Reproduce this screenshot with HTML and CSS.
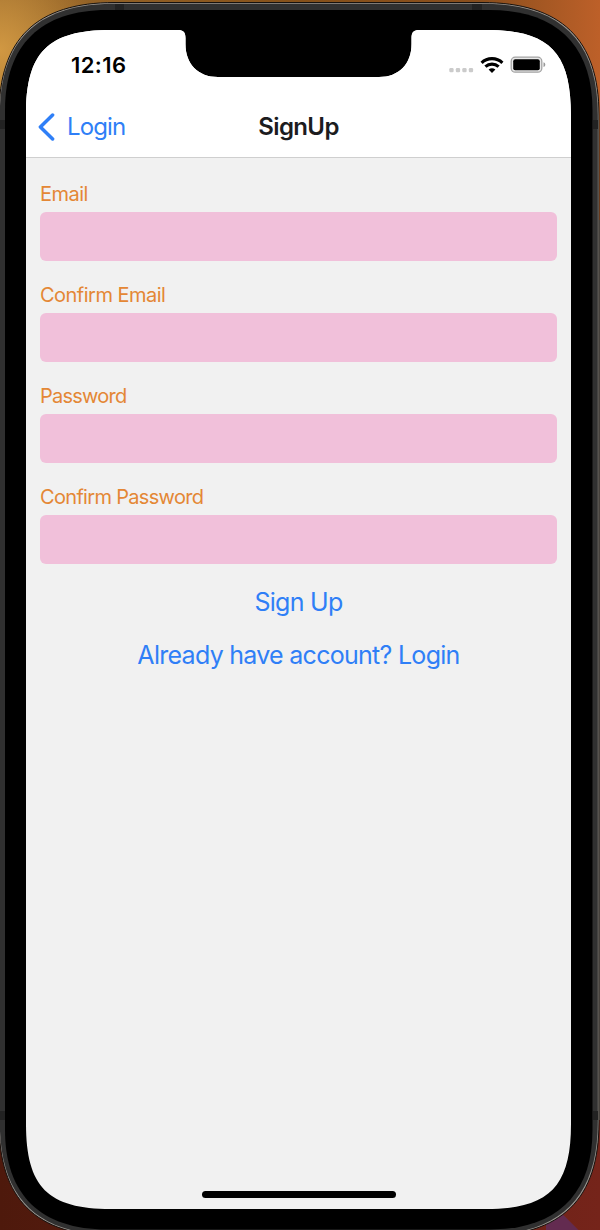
FILE: index.html
```
<!DOCTYPE html>
<html lang="en">
<head>
<meta charset="utf-8">
<title>SignUp</title>
<link rel="stylesheet" href="styles.css">
</head>
<body>
<div class="desktop">
  <svg class="shell" width="600" height="1230" viewBox="0 0 600 1230" aria-hidden="true">
    <path class="shell-rim" d="M-1 115C-1 39 36 2.500 115 2.500H482C561 2.500 599 39 599 115V1122C599 1199 562 1236 482 1236H115C35 1236 -1 1199 -1 1122Z"/>
    <path class="shell-edge" d="M-.2 115C-.2 40 37 3.700 115 3.700H482C560 3.700 597.800 40 597.800 115V1122C597.800 1198 560 1235 482 1235H115C37 1235 -.2 1198 -.2 1122Z"/>
    <path class="shell-seam" d="M115 4h9v6h-9zM472 4h10v6h-10zM0 120h5v9H0zM593 120h5v9h-5zM0 1111h5v9H0zM593 1111h5v9h-5z"/>
    <path class="shell-bezel" d="M5 110C5 45 41 10 107 10H490C556 10 592.500 45 592.500 110V1130C592.500 1195 556 1229.500 490 1229.500H107C41 1229.500 5 1195 5 1130Z"/>
  </svg>
  <main class="screen">
    <div class="status">
      <time class="clock">12:16</time>
      <div class="signals">
        <svg class="dots" width="25" height="6" viewBox="0 0 25 6" fill="#cbcbcb"><rect x=".3" y="1" width="4.300" height="4.300" rx="1.200"/><rect x="6.800" y="1" width="4.300" height="4.300" rx="1.200"/><rect x="13.300" y="1" width="4.300" height="4.300" rx="1.200"/><rect x="19.800" y="1" width="4.300" height="4.300" rx="1.200"/></svg>
        <svg width="24" height="18" viewBox="0 0 24 18" fill="none" stroke="#000" stroke-width="3.100"><path d="M1.600 6.800C7.300 1.200 16.700 1.200 22.400 6.800"/><path d="M5.400 10.700C9.200 7.200 14.800 7.200 18.600 10.700"/><path d="M8.600 13.600Q12 10.700 15.400 13.600L12 17Z" fill="#000" stroke="none"/></svg>
        <svg width="36" height="18" viewBox="0 0 36 18"><rect x="1.200" y="1.200" width="30.600" height="15" rx="4" fill="#e9e9e9" stroke="#a3a3a3" stroke-width="1.300"/><rect x="3.200" y="3.200" width="26.600" height="11" rx="2" fill="#000"/><path d="M33.500 6.300q1.800.5 1.800 2.400t-1.800 2.400z" fill="#999"/></svg>
      </div>
    </div>
    <header class="nav">
      <a class="back"><svg width="17" height="28" viewBox="0 0 17 28" fill="none" stroke="#2f7ff7" stroke-width="3.500" stroke-linecap="round" stroke-linejoin="round"><path d="M14.600 2L2.400 14L14.600 26"/></svg><span>Login</span></a>
      <h1 class="title">SignUp</h1>
    </header>
    <form class="form">
      <label class="field"><span class="label l-email">Email</span><input class="input" type="text"></label>
      <label class="field"><span class="label l-cemail">Confirm Email</span><input class="input" type="text"></label>
      <label class="field"><span class="label l-pass">Password</span><input class="input" type="password"></label>
      <label class="field"><span class="label l-cpass">Confirm Password</span><input class="input" type="password"></label>
      <button class="action signup" type="button">Sign Up</button>
      <button class="action login" type="button">Already have account? Login</button>
    </form>
    <div class="home"></div>
  </main>
</div>
</body>
</html>
```
FILE: styles.css
```
* { box-sizing: border-box; }
body { margin: 0; font-family: Inter, "Liberation Sans", sans-serif; }
.desktop {
  position: relative; width: 600px; height: 1230px; overflow: hidden; padding: 30px 29px 21px 26px;
  background:
    linear-gradient(225deg, transparent 19px, #632b50 20px) 546px 1210px / 40px 40px no-repeat,
    radial-gradient(circle at 0 50px, #d19842, transparent 100px),
    linear-gradient(90deg, #9a6a2c, #855019 50%, #8a4e1c 80%, #bd6029) 0 0 / 100% 220px no-repeat,
    linear-gradient(#77706a, #77706a) 100% 220px / 10px 900px no-repeat,
    linear-gradient(90deg, #4e190c, #75241a);
}
.shell { position: absolute; inset: 0; }
.shell-rim { fill: #98938e; stroke: #17120e; stroke-width: 1; }
.shell-edge { fill: #303030; }
.shell-seam { fill: #222; }
.shell-bezel { fill: #000; }
.screen {
  position: relative; width: 545px; height: 1179px; background: #f1f1f1;
  display: flex; flex-direction: column;
  clip-path: path("M0 85C0 22 22 0 85 0H152C157 0 159.500 2 159.500 8V14C159.500 34 172 47 192 47H353C373 47 385.500 34 385.500 14V8C385.500 2 388 0 393 0H460C523 0 545 22 545 85V1094C545 1157 523 1179 460 1179H85C22 1179 0 1157 0 1094Z");
}
.status { display: flex; justify-content: space-between; height: 66px; background: #fff; padding: 22px 25px 0 45px; }
.clock { font-size: 22px; line-height: 26px; font-weight: 600; letter-spacing: .4px; color: #000; }
.signals { display: flex; height: 25px; align-items: center; gap: 6px; }
.signals svg { flex: none; }
.signals .dots { margin-top: 11px; }
.nav {
  display: grid; grid-template-columns: 1fr auto 1fr; align-items: center; height: 62px; flex: none;
  background: #fff; border-bottom: 1px solid #cfcfcf; padding: 0 12px;
}
.back { display: flex; align-items: center; gap: 12px; color: #2f7ff7; font-size: 24px; letter-spacing: -.9px; }
.title { margin: 0; color: #1c1c1e; font-size: 24px; font-weight: 600; letter-spacing: -.6px; }
.form { display: flex; flex-direction: column; padding: 24px 14px 0; }
.field { display: flex; flex-direction: column; height: 101px; gap: 4.5px; }
.label { color: #e48735; font-size: 20px; line-height: 25px; }
.l-email { letter-spacing: -.5px; }
.l-cemail { letter-spacing: -.52px; }
.l-pass { letter-spacing: -.75px; }
.l-cpass { letter-spacing: -.68px; }
.input { height: 49.5px; width: 100%; border: 0; border-radius: 6px; background: #f1c0da; padding: 0 12px; font: inherit; outline: 0; }
.action { align-self: center; border: 0; background: none; padding: 0; color: #2f7ff7; font: 400 25px/32px Inter, sans-serif; letter-spacing: -.72px; white-space: nowrap; }
.home { width: 194px; height: 7px; border-radius: 4px; background: #000; margin: auto auto 11px 176px; }
.login { margin-top: 21px; }
```
